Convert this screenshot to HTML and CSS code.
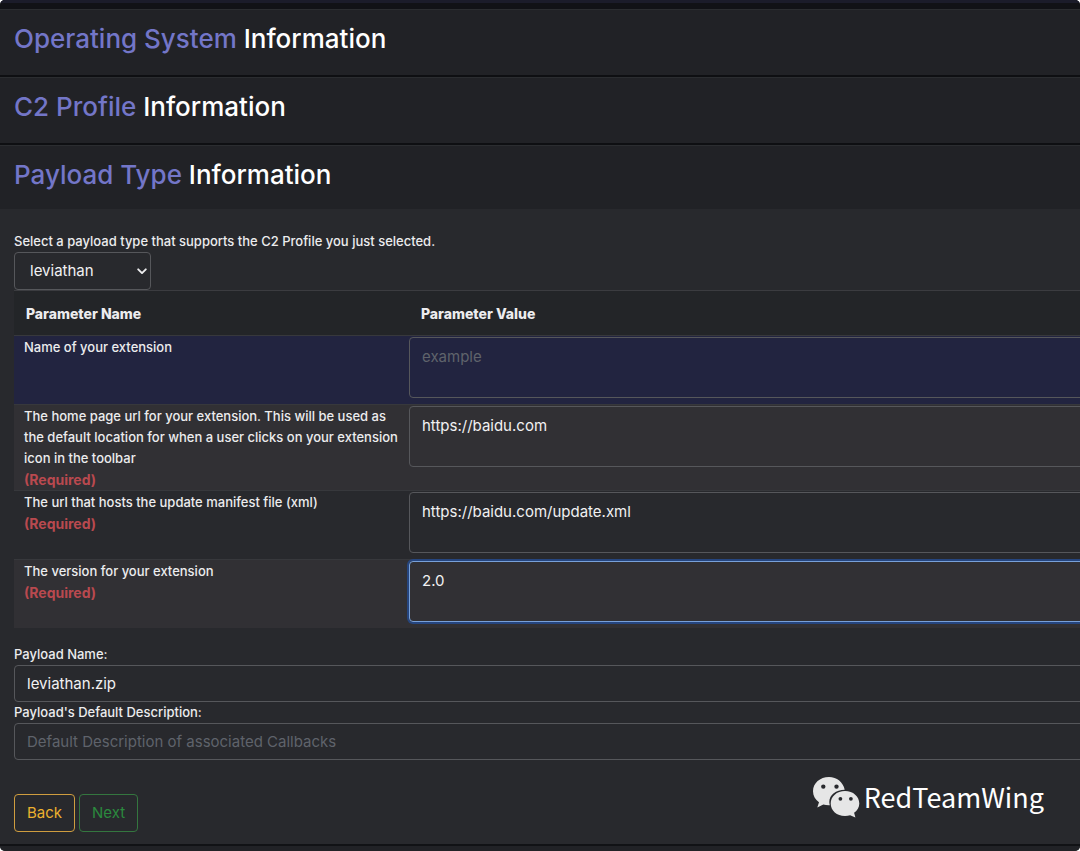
FILE: index.html
```html
<!DOCTYPE html>
<html lang="en">
<head>
<meta charset="utf-8">
<title>Create Payload</title>
<link rel="stylesheet" href="styles.css">
</head>
<body>
<main class="window">
  <div class="topbar"></div>
  <section class="card-header"><h2><span class="accent">Operating System</span> Information</h2></section>
  <section class="card-header"><h2><span class="accent">C2 Profile</span> Information</h2></section>
  <section class="card-header open"><h2><span class="accent">Payload Type</span> Information</h2></section>
  <form class="card-body">
    <label class="label" for="ptype">Select a payload type that supports the C2 Profile you just selected.</label>
    <div class="select-wrap">
      <select id="ptype" class="control select"><option>leviathan</option></select>
      <svg class="chevron" viewBox="0 0 10 7" aria-hidden="true"><path d="M1.2 1.3 5 5.1 8.8 1.3" fill="none" stroke="currentColor" stroke-width="1.9" stroke-linecap="round" stroke-linejoin="round"/></svg>
    </div>
    <table class="params">
      <colgroup><col class="col-name"><col></colgroup>
      <thead>
        <tr><th scope="col">Parameter Name</th><th scope="col">Parameter Value</th></tr>
      </thead>
      <tbody>
        <tr class="row-active">
          <td class="name"><label for="p1">Name of your extension</label></td>
          <td class="value"><textarea id="p1" class="control area" placeholder="example"></textarea></td>
        </tr>
        <tr class="row-alt">
          <td class="name"><label for="p2">The home page url for your extension. This will be used as the default location for when a user clicks on your extension icon in the toolbar</label><div class="required">(Required)</div></td>
          <td class="value"><textarea id="p2" class="control area" spellcheck="false">https://baidu.com</textarea></td>
        </tr>
        <tr>
          <td class="name"><label for="p3">The url that hosts the update manifest file (xml)</label><div class="required">(Required)</div></td>
          <td class="value"><textarea id="p3" class="control area" spellcheck="false">https://baidu.com/update.xml</textarea></td>
        </tr>
        <tr class="row-alt">
          <td class="name"><label for="p4">The version for your extension</label><div class="required">(Required)</div></td>
          <td class="value"><textarea id="p4" class="control area focused" spellcheck="false">2.0</textarea></td>
        </tr>
      </tbody>
    </table>
    <label class="label" for="pname">Payload Name:</label>
    <input id="pname" class="control text" type="text" value="leviathan.zip">
    <label class="label" for="pdesc">Payload's Default Description:</label>
    <input id="pdesc" class="control text" type="text" placeholder="Default Description of associated Callbacks">
    <div class="actions">
      <button type="button" class="btn btn-back">Back</button>
      <button type="button" class="btn btn-next">Next</button>
    </div>
  </form>
  <footer class="bottom"></footer>
  <div class="watermark">
    <svg class="wechat" viewBox="0 0 48 42" aria-hidden="true">
      <path fill="#e6e6e6" fill-rule="evenodd" d="M17 1C8 1 1 7.200 1 15.200c0 4.600 2.300 8.400 6 11L5.300 31.500l6-3.100c2 .6 4 .9 6.500.8A13 13 0 0 1 17.300 26C17.300 19 24 13.800 32.700 13.800C31.300 6.400 24.800 1 17 1ZM11.300 8.400a2.200 2.200 0 1 1 0 4.400 2.200 2.200 0 0 1 0-4.400ZM24.500 8.400a2.200 2.200 0 1 1 0 4.400 2.200 2.200 0 0 1 0-4.400Z"/>
      <path fill="#e6e6e6" fill-rule="evenodd" d="M33 15c-8.200 0-14.300 5.500-14.300 12.500S24.800 40 33 40c1.800 0 3.500-.3 5.100-.8l5.300 2.300-1.300-4.700c3.200-2.300 5.200-5.600 5.200-9.300C47.300 20.500 41.200 15 33 15ZM28.400 20.900a1.900 1.900 0 1 1 0 3.800 1.900 1.900 0 0 1 0-3.800ZM38.900 20.900a1.900 1.900 0 1 1 0 3.800 1.900 1.900 0 0 1 0-3.800Z"/>
    </svg>
    <span>RedTeamWing</span>
  </div>
</main>
</body>
</html>
```
FILE: styles.css
```css
* { box-sizing: border-box; }

html { background: #fff; }

body {
  margin: 0;
  font-family: Inter, "Liberation Sans", sans-serif;
  font-size: 13px;
  font-weight: 500;
  line-height: 21px;
  color: #ececee;
}

.window {
  position: relative;
  display: flex;
  flex-direction: column;
  min-height: 100vh;
  overflow: hidden;
  border-radius: 5px;
  background: #28292d;
}

.topbar {
  height: 9px;
  border-top: 3px solid #1b1c2a;
  background: #111216;
}

.card-header {
  padding: 11px 14px 19px;
  border-top: 1px solid #2b2d30;
  border-bottom: 2px solid #0e0f12;
  background: #212226;
}

.card-header.open {
  padding-bottom: 17px;
  border-bottom: 0;
}

h2 {
  margin: 0;
  font-size: 26px;
  font-weight: 500;
  line-height: 35px;
  color: #fff;
}

.accent { color: #7376c8; }

.card-body {
  flex: 1;
  padding: 22px 0 12px 14px;
}

.label { display: block; }

.control {
  display: block;
  border: 1px solid #56575b;
  border-radius: 4px;
  background: transparent;
  color: #f1f1f2;
  font-family: inherit;
  font-size: 15px;
  line-height: 24px;
  outline: 0;
}

.control::placeholder {
  color: #5f636b;
  opacity: 1;
}

.select-wrap {
  position: relative;
  width: 137px;
}

.select {
  width: 100%;
  height: 38px;
  padding: 0 24px 0 15px;
  appearance: none;
}

.chevron {
  position: absolute;
  top: 16px;
  right: 4px;
  width: 10px;
  height: 7px;
  pointer-events: none;
}

.params {
  width: calc(100% + 24px);
  margin-bottom: 16px;
  border-collapse: separate;
  border-spacing: 0;
  table-layout: fixed;
}

.col-name { width: 395px; }

.params th {
  padding: 12px 12px 11px;
  border-top: 1px solid #3b3c40;
  background: #232528;
  font-size: 14px;
  font-weight: 800;
  text-align: left;
}

.params td {
  padding: 1px 0 0;
  border-top: 1px solid #37383c;
  vertical-align: top;
}

.params .name { padding-left: 10px; }

.params .value { padding-bottom: 6px; }

.row-active { background: #222440; }

.row-alt { background: #313034; }

.required {
  font-size: 14px;
  font-weight: 700;
  color: #b9494f;
}

.area {
  width: 100%;
  height: 61px;
  padding: 7px 12px;
  resize: none;
  overflow: hidden;
}

.area.focused {
  border-color: #78a0d8;
  box-shadow: 0 0 0 2px #25457f;
}

.text {
  width: calc(100% + 24px);
  height: 37px;
  padding: 0 12px;
}

.actions {
  display: flex;
  gap: 4px;
  margin-top: 34px;
}

.btn {
  height: 38px;
  padding: 0 12px;
  border: 1px solid;
  border-radius: 4px;
  background: transparent;
  font-family: inherit;
  font-size: 15px;
  line-height: 24px;
}

.btn-back { border-color: #cf9d3f; color: #ecb12f; }

.btn-next { border-color: #34763f; color: #2b8a3e; }

.bottom {
  height: 7px;
  border-top: 2px solid #111215;
  background: #212226;
}

.watermark {
  position: absolute;
  right: 36px;
  bottom: 33px;
  display: flex;
  align-items: center;
  gap: 4px;
  font-family: "Noto Sans CJK SC", "Noto Sans", sans-serif;
  font-size: 27px;
  font-weight: 400;
  line-height: 42px;
  color: #fff;
}

.wechat {
  width: 48px;
  height: 42px;
}
```
